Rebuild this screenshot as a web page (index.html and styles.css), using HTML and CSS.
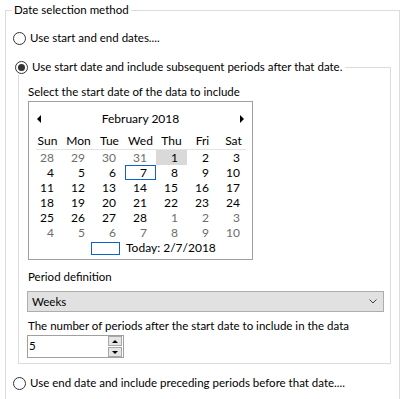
FILE: index.html
```html
<html>
  <head>
    <title>Date selection method</title>
    <link rel="stylesheet" href="styles.css">
  </head>
  <body>
    <fieldset class="group outer">
      <legend class="group-title">Date selection method</legend>
      <label class="option"><span class="radio"></span>Use start and end dates....</label>
      <fieldset class="group inner">
        <legend class="option inner-title"><span class="radio checked"></span>Use start date and include subsequent periods after that date.</legend>
        <div class="caption">Select the start date of the data to include</div>
        <div class="calendar">
          <div class="cal-head">
            <span class="arrow prev"></span>
            <span class="month">February 2018</span>
            <span class="arrow next"></span>
          </div>
          <div class="cal-days">
            <span>Sun</span><span>Mon</span><span>Tue</span><span>Wed</span><span>Thu</span><span>Fri</span><span>Sat</span>
          </div>
          <div class="cal-grid">
            <span class="other">28</span><span class="other">29</span><span class="other">30</span><span class="other">31</span><span class="selected">1</span><span>2</span><span>3</span>
            <span>4</span><span>5</span><span>6</span><span class="today">7</span><span>8</span><span>9</span><span>10</span>
            <span>11</span><span>12</span><span>13</span><span>14</span><span>15</span><span>16</span><span>17</span>
            <span>18</span><span>19</span><span>20</span><span>21</span><span>22</span><span>23</span><span>24</span>
            <span>25</span><span>26</span><span>27</span><span>28</span><span class="other">1</span><span class="other">2</span><span class="other">3</span>
            <span class="other">4</span><span class="other">5</span><span class="other">6</span><span class="other">7</span><span class="other">8</span><span class="other">9</span><span class="other">10</span>
          </div>
          <div class="cal-today"><span class="today-box"></span>Today: 2/7/2018</div>
        </div>
        <div class="caption spaced">Period definition</div>
        <div class="select">
          <span>Weeks</span>
          <svg width="8" height="5" viewBox="0 0 8 5"><path d="M0.5 0.5 L4 4 L7.5 0.5" fill="none" stroke="#444" stroke-width="1"/></svg>
        </div>
        <div class="caption after-select">The number of periods after the start date to include in the data</div>
        <div class="spin">
          <span class="spin-value">5</span>
          <div class="spin-buttons">
            <span class="spin-btn up"></span>
            <span class="spin-btn down"></span>
          </div>
        </div>
      </fieldset>
      <label class="option last"><span class="radio"></span>Use end date and include preceding periods before that date....</label>
    </fieldset>
  </body>
</html>
```

FILE: styles.css
```css
* {
  box-sizing: border-box;
}
body {
  margin: 0;
  font: 11.5px/16px Lato, sans-serif;
  color: #000;
  background: #fff;
}
.group {
  margin: 0;
  min-width: 0;
  border: 1px solid #dcdcdc;
}
.outer {
  margin: 2px 6px 0 5px;
  padding: 12px 8px 40px 6px;
}
.group-title {
  padding: 0 2px;
  height: 16px;
}
.option {
  display: flex;
  align-items: center;
  gap: 4px;
  height: 16px;
  margin-left: 1px;
  white-space: nowrap;
}
.radio {
  width: 13px;
  height: 13px;
  border: 1px solid #333;
  border-radius: 50%;
  display: grid;
  place-items: center;
  flex: none;
}
.radio.checked::after {
  content: "";
  width: 7px;
  height: 7px;
  border-radius: 50%;
  background: #333;
}
.inner {
  margin: 13px 0 0 6px;
  padding: 9px 6px 5px 8px;
}
.inner-title {
  margin-left: -14px;
  padding-right: 3px;
  background: #fff;
}
.option.last {
  margin-top: 11px;
}
.caption {
  height: 16px;
  padding-left: 1px;
  white-space: nowrap;
}
.caption.spaced {
  margin-top: 9px;
}
.caption.after-select {
  margin-top: 6px;
}

/* month calendar */
.calendar {
  width: 225px;
  margin: 1px 0 0 1px;
  border: 1px solid #a0a0a0;
  padding: 9px 3px 4px 3px;
}
.cal-head {
  display: flex;
  justify-content: space-between;
  align-items: center;
  height: 16px;
  padding: 0 5px;
  font-size: 12px;
}
.arrow {
  width: 0;
  height: 0;
  border-top: 4px solid transparent;
  border-bottom: 4px solid transparent;
}
.arrow.prev {
  border-right: 4px solid #000;
}
.arrow.next {
  border-left: 4px solid #000;
}
.cal-days {
  display: grid;
  grid-template-columns: repeat(7, 31px);
  height: 17px;
  margin-top: 6px;
  font-size: 12px;
  text-align: center;
  background: linear-gradient(#e3e3e3, #e3e3e3) 4px 100% / 210px 1px no-repeat;
}
.cal-grid {
  display: grid;
  grid-template-columns: repeat(7, 31px);
  grid-auto-rows: 15px;
  font-size: 12px;
  line-height: 15px;
  text-align: right;
}
.cal-grid span {
  padding-right: 9px;
}
.cal-grid .other {
  color: #6d6d6d;
}
.cal-grid .selected {
  background: #d9d9d9;
}
.cal-grid .today {
  box-shadow: inset 0 0 0 1px #0a64c8;
}
.cal-today {
  display: flex;
  align-items: center;
  gap: 6px;
  height: 14px;
  margin-top: 1px;
  padding-left: 59px;
  font-size: 12px;
}
.today-box {
  width: 29px;
  height: 13px;
  border: 1px solid #0a64c8;
}

/* combo box */
.select {
  display: flex;
  justify-content: space-between;
  align-items: center;
  height: 21px;
  margin-top: 6px;
  padding: 0 6px 0 4px;
  background: #e1e1e1;
  border: 1px solid #adadad;
}

/* numeric up-down */
.spin {
  display: flex;
  width: 97px;
  height: 23px;
  margin-top: 1px;
  border: 1px solid #a0a0a0;
}
.spin-value {
  flex: 1;
  padding-left: 1px;
  line-height: 19px;
}
.spin-buttons {
  display: flex;
  flex-direction: column;
  gap: 1px;
  width: 15px;
  padding: 0 1px 0 0;
}
.spin-btn {
  flex: 1;
  display: grid;
  place-items: center;
  background: #e5e5e5;
  border: 1px solid #a8a8a8;
}
.spin-btn::after {
  content: "";
  border-left: 3px solid transparent;
  border-right: 3px solid transparent;
}
.spin-btn.up::after {
  border-bottom: 3px solid #000;
}
.spin-btn.down::after {
  border-top: 3px solid #000;
}
```
